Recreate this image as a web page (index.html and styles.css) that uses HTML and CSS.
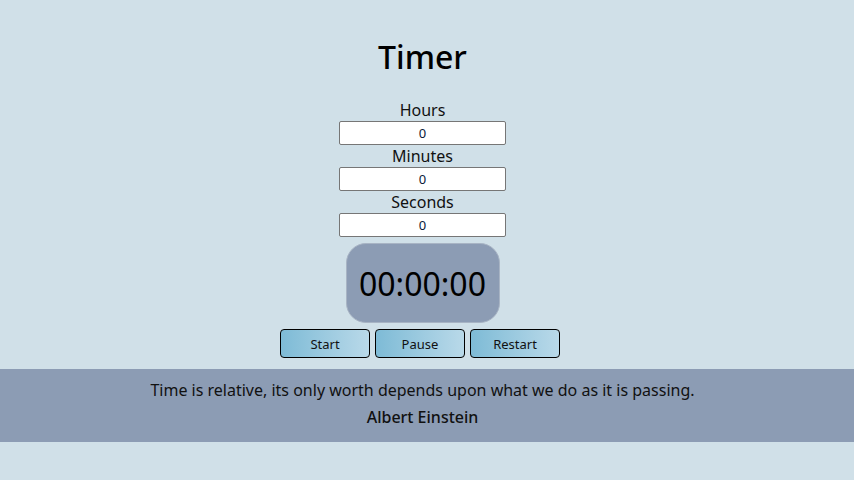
FILE: index.html
```html
<!DOCTYPE html>
<html>
<head>
<meta charset="utf-8">
<link rel="stylesheet" href="styles.css">
</head>
<body>
<main class="app">
  <h1 class="title">Timer</h1>
  <div class="fields">
    <label class="field-label" for="h">Hours</label>
    <input class="field" id="h" type="text" value="0">
    <label class="field-label" for="m">Minutes</label>
    <input class="field" id="m" type="text" value="0">
    <label class="field-label" for="s">Seconds</label>
    <input class="field" id="s" type="text" value="0">
  </div>
  <div class="display">00:00:00</div>
  <div class="buttons">
    <button class="btn">Start</button>
    <button class="btn">Pause</button>
    <button class="btn">Restart</button>
  </div>
</main>
<footer class="quote">
  <p class="quote-text">Time is relative, its only worth depends upon what we do as it is passing.</p>
  <p class="quote-author">Albert Einstein</p>
</footer>
</body>
</html>
```
FILE: styles.css
```css
html, body {
  margin: 0;
  padding: 0;
  background: #d0e0e8;
  font-family: "Noto Sans", "Open Sans", sans-serif;
  color: #000;
}
.app {
  display: flex;
  flex-direction: column;
  align-items: center;
  padding-right: 9px;
}
.title {
  font-size: 32px;
  font-weight: 500;
  margin: 35px 0 0 0;
  line-height: 44px;
}
.fields {
  display: flex;
  flex-direction: column;
  align-items: center;
  margin-top: 21px;
}
.field-label {
  font-size: 16px;
  line-height: 21px;
  color: #111;
}
.field {
  box-sizing: border-box;
  width: 167px;
  height: 24px;
  margin: 0 0 1px 0;
  padding: 0 2px;
  border: 1px solid #767676;
  border-radius: 2px;
  background: #fff;
  text-align: center;
  font-family: "Noto Sans", "Open Sans", sans-serif;
  font-size: 13px;
  color: #0a1a3a;
}
.display {
  box-sizing: border-box;
  margin-top: 5px;
  width: 154px;
  height: 80px;
  border-radius: 20px;
  border: 1px solid #a8b4c4;
  background: #8c9cb4;
  display: flex;
  align-items: center;
  justify-content: center;
  font-size: 32px;
  color: #000;
}
.buttons {
  display: flex;
  gap: 5px;
  margin-top: 6px;
  padding-right: 5px;
}
.btn {
  box-sizing: border-box;
  width: 90px;
  height: 29px;
  border: 1px solid #000;
  border-radius: 4px;
  background: linear-gradient(to right, #7ebbd6, #b9d9e9);
  font-family: "Noto Sans", "Open Sans", sans-serif;
  font-size: 13px;
  color: #111;
  padding: 0;
}
.quote {
  margin-top: 11px;
  background: #8c9cb4;
  height: 73px;
  box-sizing: border-box;
  padding: 8px 9px 0 0;
  text-align: center;
}
.quote-text {
  margin: 0;
  font-size: 16px;
  line-height: 27px;
  color: #111;
}
.quote-author {
  margin: 0;
  font-size: 16px;
  font-weight: 500;
  line-height: 26px;
  color: #111;
}
```
